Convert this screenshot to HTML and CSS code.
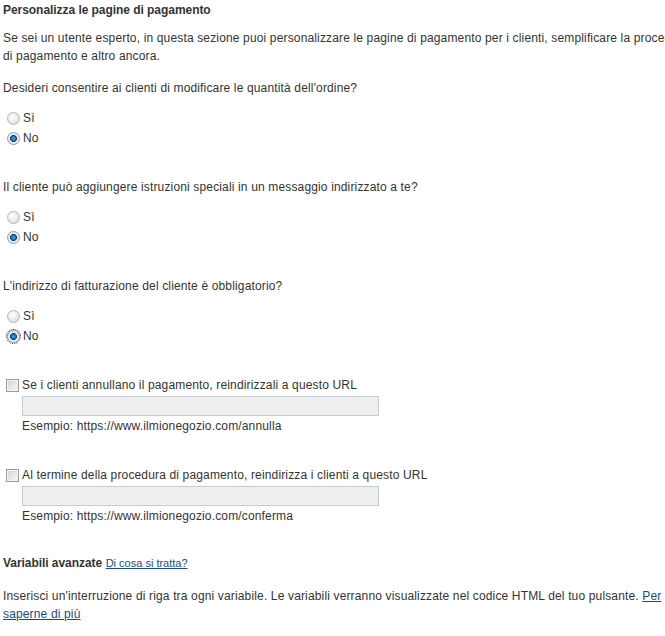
FILE: index.html
```html
<!DOCTYPE html>
<html lang="it">
<head>
<meta charset="utf-8">
<title>Personalizza le pagine di pagamento</title>
<link rel="stylesheet" href="styles.css">
</head>
<body>
<div class="page">
  <h3 class="title">Personalizza le pagine di pagamento</h3>
  <p class="intro">Se sei un utente esperto, in questa sezione puoi personalizzare le pagine di pagamento per i clienti, semplificare la procedura di pagamento e altro ancora.</p>

  <div class="group first">
    <p class="question">Desideri consentire ai clienti di modificare le quantità dell'ordine?</p>
    <label class="opt"><input type="radio" class="radio" name="q1"> Sì</label>
    <label class="opt"><input type="radio" class="radio" name="q1" checked> No</label>
  </div>

  <div class="group">
    <p class="question">Il cliente può aggiungere istruzioni speciali in un messaggio indirizzato a te?</p>
    <label class="opt"><input type="radio" class="radio" name="q2"> Sì</label>
    <label class="opt"><input type="radio" class="radio" name="q2" checked> No</label>
  </div>

  <div class="group">
    <p class="question">L'indirizzo di fatturazione del cliente è obbligatorio?</p>
    <label class="opt"><input type="radio" class="radio" name="q3"> Sì</label>
    <label class="opt"><input type="radio" class="radio focused" name="q3" checked> No</label>
  </div>

  <div class="group url">
    <label class="opt check"><input type="checkbox" class="checkbox"> Se i clienti annullano il pagamento, reindirizzali a questo URL</label>
    <input type="text" class="field">
    <p class="example">Esempio: https://www.ilmionegozio.com/annulla</p>
  </div>

  <div class="group url">
    <label class="opt check"><input type="checkbox" class="checkbox"> Al termine della procedura di pagamento, reindirizza i clienti a questo URL</label>
    <input type="text" class="field">
    <p class="example">Esempio: https://www.ilmionegozio.com/conferma</p>
  </div>

  <div class="group adv">
    <p class="adv-title"><strong>Variabili avanzate</strong> <a href="#" class="small-link">Di cosa si tratta?</a></p>
    <p class="adv-text">Inserisci un'interruzione di riga tra ogni variabile. Le variabili verranno visualizzate nel codice HTML del tuo pulsante. <a href="#" class="link">Per saperne di più</a></p>
  </div>
</div>
</body>
</html>
```
FILE: styles.css
```css
html {
  overflow: hidden;
  background: #fff;
}
body {
  margin: 0;
  font-family: "Liberation Sans", Arial, sans-serif;
  font-size: 12px;
  line-height: 18px;
  letter-spacing: 0.15px;
  color: #333;
}
.page {
  width: 660px;
  padding: 1px 0 0 3px;
}
.title {
  margin: 0;
  font-size: 12px;
  font-weight: bold;
  line-height: 18px;
  letter-spacing: -0.05px;
}
.intro {
  margin: 10px 0 0;
  width: 696px;
}
.group {
  margin-top: 30px;
}
.group.first {
  margin-top: 14px;
}
.group.url + .group.url {
  margin-top: 31px;
}
.group.adv {
  margin-top: 29px;
}
.question {
  margin: 0 0 11px;
}
.opt {
  display: flex;
  align-items: center;
  height: 20px;
  padding-left: 4px;
}
.radio {
  appearance: none;
  -webkit-appearance: none;
  margin: 0 3px 0 0;
  width: 13px;
  height: 13px;
  border-radius: 50%;
  border: 1px solid #b4b4b4;
  background: radial-gradient(circle at 40% 35%, #ffffff 0, #f0f0f0 40%, #cfcfcf 100%);
  box-sizing: border-box;
}
.radio:checked {
  border-color: #8aa0b4;
  background: radial-gradient(circle at 50% 50%, #5fa8d8 0, #1e6aa8 28%, #0f3e6e 42%, #e9eef2 48%, #dfe4e8 100%);
}
.radio.focused {
  outline: 1px dotted #222;
  outline-offset: 0;
}
.check {
  padding-left: 3px;
  height: 18px;
}
.checkbox {
  appearance: none;
  -webkit-appearance: none;
  margin: 0 3px 0 0;
  width: 13px;
  height: 13px;
  box-sizing: border-box;
  border: 1px solid #9a9a9a;
  background: linear-gradient(135deg, #d0d0d0 0%, #e6e6e6 50%, #f7f7f7 100%);
  box-shadow: inset 0 0 0 1px #f2f2f2;
}
.field {
  display: block;
  margin: 2px 0 1px 19px;
  width: 357px;
  height: 20px;
  box-sizing: border-box;
  border: 1px solid #c3cbd3;
  background: #efefef;
  padding: 0 4px;
  font: inherit;
}
.example {
  margin: 1px 0 0 19px;
}
.adv-title {
  margin: 0;
}
.adv-title strong {
  letter-spacing: -0.05px;
}
.small-link {
  font-size: 11px;
  letter-spacing: 0;
  color: #164c8c;
}
.adv-text {
  margin: 15px 0 0;
}
.link {
  color: #164c8c;
}
```
